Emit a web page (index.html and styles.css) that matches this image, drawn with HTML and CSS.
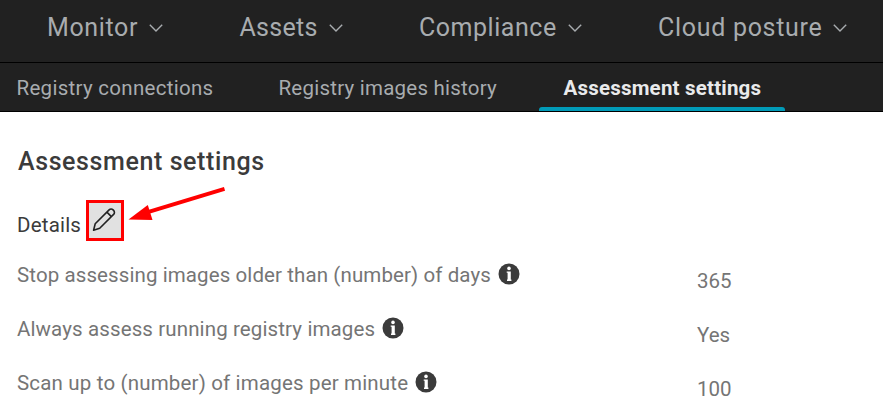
FILE: index.html
```
<!DOCTYPE html>
<html lang="en">
<head>
<meta charset="utf-8">
<title>Assessment settings</title>
<link rel="stylesheet" href="styles.css">
</head>
<body>
<svg class="sprite" aria-hidden="true">
  <symbol id="chevron" viewBox="0 0 14 8"><path d="M.8.8 7 7 13.2.8" fill="none" stroke="currentColor" stroke-width="1.4"/></symbol>
  <symbol id="info" viewBox="0 0 22 22"><circle cx="11" cy="11" r="10.5" fill="#3b3b3b"/><circle cx="11" cy="5.4" r="1.8" fill="#fff"/><path d="M8.7 8.4h4.1v8.1h.6v1.4H9v-1.4h.6V9.8h-.9z" fill="#fff"/></symbol>
</svg>
<nav class="main-nav">
  <a class="nav-item monitor">Monitor<svg class="chevron"><use href="#chevron"/></svg></a>
  <a class="nav-item assets">Assets<svg class="chevron"><use href="#chevron"/></svg></a>
  <a class="nav-item compliance">Compliance<svg class="chevron"><use href="#chevron"/></svg></a>
  <a class="nav-item posture">Cloud posture<svg class="chevron"><use href="#chevron"/></svg></a>
</nav>
<nav class="tabs">
  <a class="tab connections">Registry connections</a>
  <a class="tab history">Registry images history</a>
  <a class="tab active">Assessment settings</a>
</nav>
<main>
  <h1>Assessment settings</h1>
  <div class="details">
    <h2>Details</h2>
    <button class="edit" aria-label="Edit">
      <svg viewBox="0 0 32 35" width="32" height="35"><path d="M4.6 27.2 6.2 20.8 20.1 6.9a2.8 2.8 0 0 1 4 0l.5.5a2.8 2.8 0 0 1 0 4L10.7 25.3zM17.9 9.1l4.5 4.5" fill="none" stroke="#222" stroke-width="1.6" stroke-linejoin="round"/></svg>
      <svg class="arrow" viewBox="0 0 100 40" width="100" height="40"><path d="M97.5 4.8 20 28.3" stroke="#f00" stroke-width="4"/><path d="M1.5 35.5 20.8 21 25.5 36z" fill="#f00"/></svg>
    </button>
  </div>
  <dl>
    <dt class="age">Stop assessing images older than (number) of days<svg class="info"><use href="#info"/></svg></dt><dd>365</dd>
    <dt class="running">Always assess running registry images<svg class="info"><use href="#info"/></svg></dt><dd>Yes</dd>
    <dt class="rate">Scan up to (number) of images per minute<svg class="info"><use href="#info"/></svg></dt><dd>100</dd>
  </dl>
</main>
</body>
</html>
```
FILE: styles.css
```
* { box-sizing: border-box; }
body {
  margin: 0;
  height: 414px;
  overflow: hidden;
  background: #fff;
  font: 20.5px/24px Roboto, sans-serif;
}
svg { display: block; flex: none; }
.sprite { width: 0; height: 0; position: absolute; }
.main-nav {
  display: flex;
  gap: 76.3px;
  height: 63px;
  padding: 13px 0 0 47px;
  background: #212121;
  border-bottom: 1px solid #000;
  color: #a8acaf;
  font-size: 25px;
  line-height: 30px;
  white-space: nowrap;
}
.nav-item { display: flex; }
.monitor { letter-spacing: .64px; }
.assets { letter-spacing: .29px; }
.compliance { letter-spacing: .54px; }
.posture { letter-spacing: .7px; }
.chevron { width: 14px; height: 8px; margin: 11px 0 0 11px; }
.tabs {
  display: flex;
  height: 49px;
  background: #212121;
  border-bottom: 1px solid #000;
  color: #a8acaf;
  white-space: nowrap;
}
.tab { padding-top: 13px; }
.connections { width: 262px; padding-left: 16.5px; letter-spacing: .29px; }
.history { width: 277px; padding-left: 16.5px; letter-spacing: .23px; }
.active {
  position: relative;
  width: 246px;
  padding-left: 24.5px;
  color: #e9eaeb;
  font-weight: 700;
  letter-spacing: .2px;
}
.active::after {
  content: "";
  position: absolute;
  inset: auto 0 0;
  height: 4px;
  border-radius: 3px 3px 0 0;
  background: #019bb8;
}
main { padding: 35px 0 0 17px; }
h1 {
  margin: 0 0 0 1px;
  color: #3b3b3b;
  font-size: 25px;
  line-height: 30px;
  font-weight: 500;
  letter-spacing: .6px;
}
.details { display: flex; margin-top: 23px; height: 41px; }
h2 {
  width: 69px;
  margin: 13px 0 0;
  color: #3b3b3b;
  font-size: 20.5px;
  line-height: 24px;
  font-weight: 400;
  letter-spacing: .2px;
}
.edit {
  position: relative;
  width: 38px;
  height: 41px;
  padding: 0;
  border: 3px solid #f00;
  background: #e1e1e1;
}
.arrow { position: absolute; left: 38px; top: -19px; }
dl {
  display: grid;
  grid-template-columns: 680px 1fr;
  grid-auto-rows: 54px;
  margin: 21px 0 0;
  color: #757575;
  white-space: nowrap;
}
dt { display: flex; padding-top: 1px; }
.age { letter-spacing: .1px; }
.running { letter-spacing: .12px; }
.rate { letter-spacing: .17px; }
.info { width: 22px; height: 22px; margin-left: 7px; }
dd { margin: 0; padding-top: 7px; }
```
